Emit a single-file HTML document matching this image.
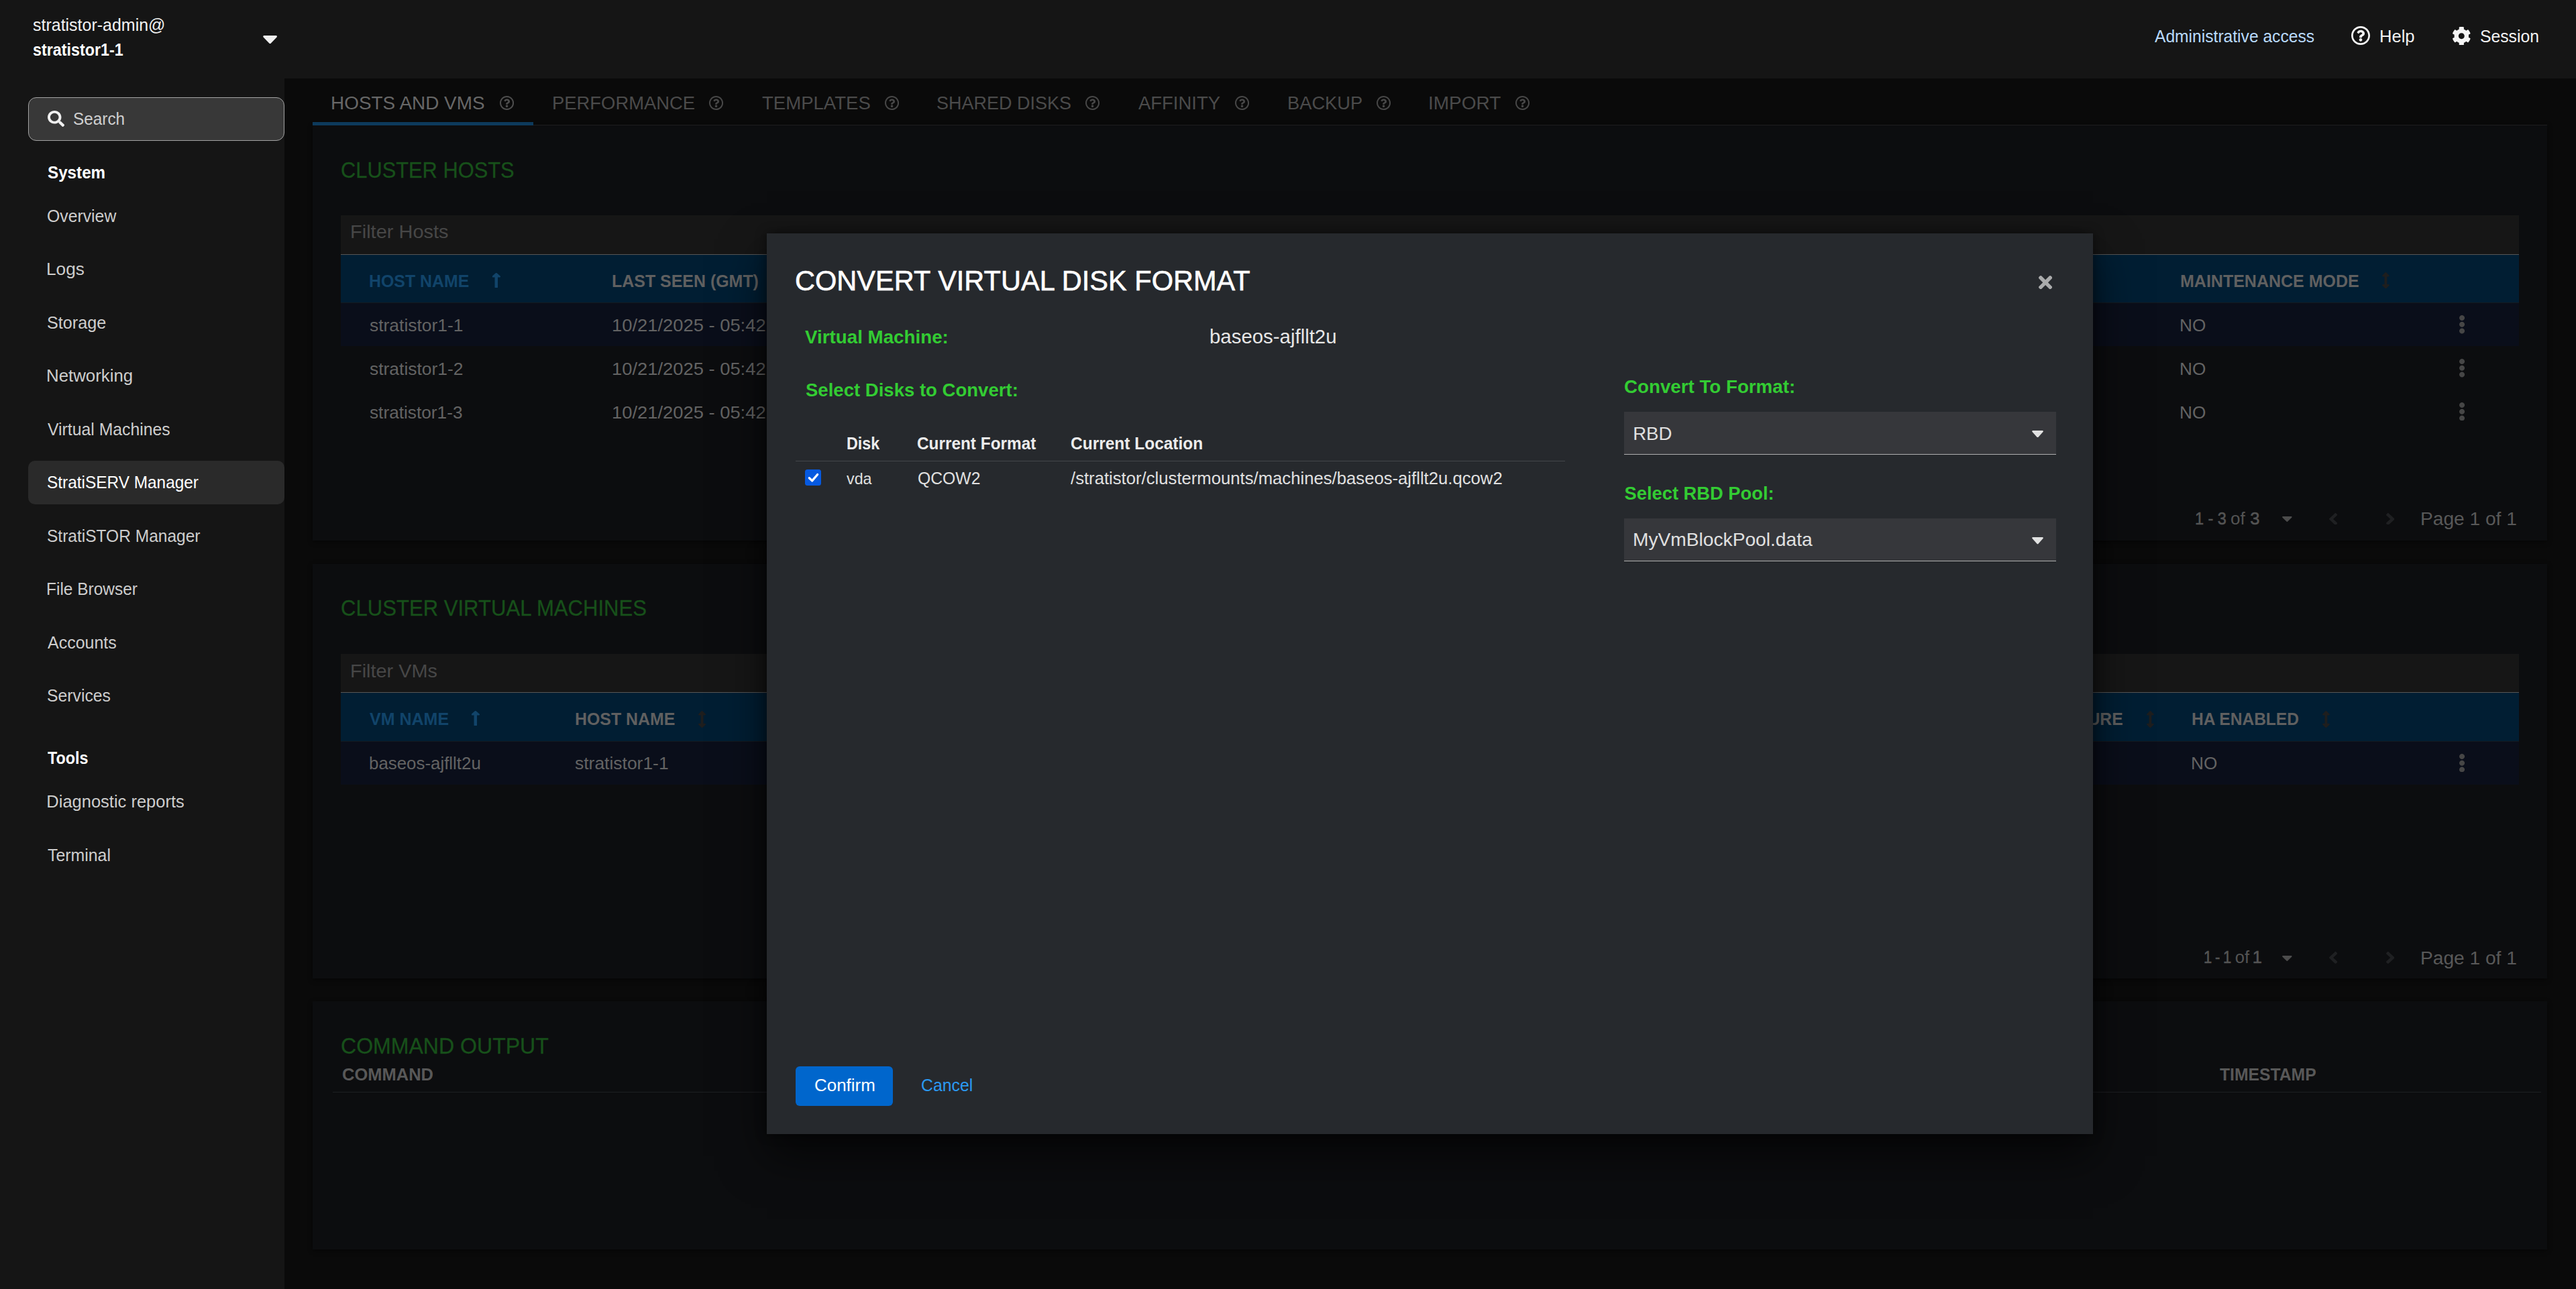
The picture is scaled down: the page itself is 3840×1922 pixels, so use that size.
<!DOCTYPE html>
<html lang="en"><head><meta charset="utf-8"><title>StratiSERV Manager - Convert Virtual Disk Format</title>
<style>
html,body{margin:0;padding:0;background:#0a0a0a;}
body{width:3840px;height:1922px;overflow:hidden;position:relative;font-family:"Liberation Sans", sans-serif;-webkit-font-smoothing:antialiased;}
#root{position:absolute;left:0;top:0;width:3840px;height:1922px;overflow:hidden;}
#root div,#root span,#root svg{position:absolute;}
#root span{white-space:pre;transform-origin:0 0;}
.md{-webkit-text-stroke:0.6px currentColor;}
.sm{-webkit-text-stroke:0.3px currentColor;}
</style></head><body>
<div id="root">
<main>
<div style="left:424px;top:117px;width:3416px;height:1805px;background:#0a0a0a;"></div>
<div style="left:466px;top:186px;width:3331px;height:620px;background:#0c0d0f;box-shadow:0 2px 6px rgba(0,0,0,.5);"></div>
<div style="left:466px;top:841px;width:3331px;height:618px;background:#0c0d0f;box-shadow:0 2px 6px rgba(0,0,0,.5);"></div>
<div style="left:466px;top:1493px;width:3331px;height:370px;background:#0c0d0f;box-shadow:0 2px 6px rgba(0,0,0,.5);"></div>
<div style="left:466px;top:186px;width:3331px;height:1px;background:#1e1e1e;"></div>
<div style="left:466px;top:182px;width:329px;height:5px;background:#0d3a5c;"></div>
<span style="left:492.62px;top:138.63px;font-size:28.2px;line-height:28.2px;color:#676767;transform:scaleX(0.9906);">HOSTS AND VMS</span>
<svg style="left:745.4px;top:143px" width="21.1" height="21" viewBox="8 8 496 496" preserveAspectRatio="none"><path fill="#4d4d4d" d="M256 8C119.043 8 8 119.083 8 256c0 136.997 111.043 248 248 248s248-111.003 248-248C504 119.083 392.957 8 256 8zm0 448c-110.532 0-200-89.431-200-200 0-110.495 89.472-200 200-200 110.491 0 200 89.471 200 200 0 110.53-89.431 200-200 200zm107.244-255.2c0 67.052-72.421 68.084-72.421 92.863V300c0 6.627-5.373 12-12 12h-45.647c-6.627 0-12-5.373-12-12v-8.659c0-35.745 27.1-50.034 47.579-61.516 17.561-9.845 28.324-16.541 28.324-29.579 0-17.246-21.999-28.693-39.784-28.693-23.189 0-33.894 10.977-48.942 29.969-4.057 5.12-11.46 6.071-16.666 2.124l-27.824-21.098c-5.107-3.872-6.251-11.066-2.644-16.363C184.846 131.491 214.94 112 261.794 112c49.071 0 101.45 38.304 101.45 88.8zM298 368c0 23.159-18.841 42-42 42s-42-18.841-42-42 18.841-42 42-42 42 18.841 42 42z"/></svg>
<span style="left:822.76px;top:138.63px;font-size:28.2px;line-height:28.2px;color:#4b4b4b;transform:scaleX(0.9720);">PERFORMANCE</span>
<svg style="left:1057.1px;top:143px" width="21.1" height="21" viewBox="8 8 496 496" preserveAspectRatio="none"><path fill="#474747" d="M256 8C119.043 8 8 119.083 8 256c0 136.997 111.043 248 248 248s248-111.003 248-248C504 119.083 392.957 8 256 8zm0 448c-110.532 0-200-89.431-200-200 0-110.495 89.472-200 200-200 110.491 0 200 89.471 200 200 0 110.53-89.431 200-200 200zm107.244-255.2c0 67.052-72.421 68.084-72.421 92.863V300c0 6.627-5.373 12-12 12h-45.647c-6.627 0-12-5.373-12-12v-8.659c0-35.745 27.1-50.034 47.579-61.516 17.561-9.845 28.324-16.541 28.324-29.579 0-17.246-21.999-28.693-39.784-28.693-23.189 0-33.894 10.977-48.942 29.969-4.057 5.12-11.46 6.071-16.666 2.124l-27.824-21.098c-5.107-3.872-6.251-11.066-2.644-16.363C184.846 131.491 214.94 112 261.794 112c49.071 0 101.45 38.304 101.45 88.8zM298 368c0 23.159-18.841 42-42 42s-42-18.841-42-42 18.841-42 42-42 42 18.841 42 42z"/></svg>
<span style="left:1136.00px;top:138.63px;font-size:28.2px;line-height:28.2px;color:#4b4b4b;transform:scaleX(0.9775);">TEMPLATES</span>
<svg style="left:1319px;top:143px" width="21.1" height="21" viewBox="8 8 496 496" preserveAspectRatio="none"><path fill="#474747" d="M256 8C119.043 8 8 119.083 8 256c0 136.997 111.043 248 248 248s248-111.003 248-248C504 119.083 392.957 8 256 8zm0 448c-110.532 0-200-89.431-200-200 0-110.495 89.472-200 200-200 110.491 0 200 89.471 200 200 0 110.53-89.431 200-200 200zm107.244-255.2c0 67.052-72.421 68.084-72.421 92.863V300c0 6.627-5.373 12-12 12h-45.647c-6.627 0-12-5.373-12-12v-8.659c0-35.745 27.1-50.034 47.579-61.516 17.561-9.845 28.324-16.541 28.324-29.579 0-17.246-21.999-28.693-39.784-28.693-23.189 0-33.894 10.977-48.942 29.969-4.057 5.12-11.46 6.071-16.666 2.124l-27.824-21.098c-5.107-3.872-6.251-11.066-2.644-16.363C184.846 131.491 214.94 112 261.794 112c49.071 0 101.45 38.304 101.45 88.8zM298 368c0 23.159-18.841 42-42 42s-42-18.841-42-42 18.841-42 42-42 42 18.841 42 42z"/></svg>
<span style="left:1395.84px;top:138.63px;font-size:28.2px;line-height:28.2px;color:#4b4b4b;transform:scaleX(0.9573);">SHARED DISKS</span>
<svg style="left:1618px;top:143px" width="21.1" height="21" viewBox="8 8 496 496" preserveAspectRatio="none"><path fill="#474747" d="M256 8C119.043 8 8 119.083 8 256c0 136.997 111.043 248 248 248s248-111.003 248-248C504 119.083 392.957 8 256 8zm0 448c-110.532 0-200-89.431-200-200 0-110.495 89.472-200 200-200 110.491 0 200 89.471 200 200 0 110.53-89.431 200-200 200zm107.244-255.2c0 67.052-72.421 68.084-72.421 92.863V300c0 6.627-5.373 12-12 12h-45.647c-6.627 0-12-5.373-12-12v-8.659c0-35.745 27.1-50.034 47.579-61.516 17.561-9.845 28.324-16.541 28.324-29.579 0-17.246-21.999-28.693-39.784-28.693-23.189 0-33.894 10.977-48.942 29.969-4.057 5.12-11.46 6.071-16.666 2.124l-27.824-21.098c-5.107-3.872-6.251-11.066-2.644-16.363C184.846 131.491 214.94 112 261.794 112c49.071 0 101.45 38.304 101.45 88.8zM298 368c0 23.159-18.841 42-42 42s-42-18.841-42-42 18.841-42 42-42 42 18.841 42 42z"/></svg>
<span style="left:1696.80px;top:138.63px;font-size:28.2px;line-height:28.2px;color:#4b4b4b;transform:scaleX(0.9739);">AFFINITY</span>
<svg style="left:1840.7px;top:143px" width="21.1" height="21" viewBox="8 8 496 496" preserveAspectRatio="none"><path fill="#474747" d="M256 8C119.043 8 8 119.083 8 256c0 136.997 111.043 248 248 248s248-111.003 248-248C504 119.083 392.957 8 256 8zm0 448c-110.532 0-200-89.431-200-200 0-110.495 89.472-200 200-200 110.491 0 200 89.471 200 200 0 110.53-89.431 200-200 200zm107.244-255.2c0 67.052-72.421 68.084-72.421 92.863V300c0 6.627-5.373 12-12 12h-45.647c-6.627 0-12-5.373-12-12v-8.659c0-35.745 27.1-50.034 47.579-61.516 17.561-9.845 28.324-16.541 28.324-29.579 0-17.246-21.999-28.693-39.784-28.693-23.189 0-33.894 10.977-48.942 29.969-4.057 5.12-11.46 6.071-16.666 2.124l-27.824-21.098c-5.107-3.872-6.251-11.066-2.644-16.363C184.846 131.491 214.94 112 261.794 112c49.071 0 101.45 38.304 101.45 88.8zM298 368c0 23.159-18.841 42-42 42s-42-18.841-42-42 18.841-42 42-42 42 18.841 42 42z"/></svg>
<span style="left:1918.56px;top:138.63px;font-size:28.2px;line-height:28.2px;color:#4b4b4b;transform:scaleX(0.9680);">BACKUP</span>
<svg style="left:2051.6px;top:143px" width="21.1" height="21" viewBox="8 8 496 496" preserveAspectRatio="none"><path fill="#474747" d="M256 8C119.043 8 8 119.083 8 256c0 136.997 111.043 248 248 248s248-111.003 248-248C504 119.083 392.957 8 256 8zm0 448c-110.532 0-200-89.431-200-200 0-110.495 89.472-200 200-200 110.491 0 200 89.471 200 200 0 110.53-89.431 200-200 200zm107.244-255.2c0 67.052-72.421 68.084-72.421 92.863V300c0 6.627-5.373 12-12 12h-45.647c-6.627 0-12-5.373-12-12v-8.659c0-35.745 27.1-50.034 47.579-61.516 17.561-9.845 28.324-16.541 28.324-29.579 0-17.246-21.999-28.693-39.784-28.693-23.189 0-33.894 10.977-48.942 29.969-4.057 5.12-11.46 6.071-16.666 2.124l-27.824-21.098c-5.107-3.872-6.251-11.066-2.644-16.363C184.846 131.491 214.94 112 261.794 112c49.071 0 101.45 38.304 101.45 88.8zM298 368c0 23.159-18.841 42-42 42s-42-18.841-42-42 18.841-42 42-42 42 18.841 42 42z"/></svg>
<span style="left:2128.61px;top:138.63px;font-size:28.2px;line-height:28.2px;color:#4b4b4b;transform:scaleX(0.9936);">IMPORT</span>
<svg style="left:2258.6px;top:143px" width="21.1" height="21" viewBox="8 8 496 496" preserveAspectRatio="none"><path fill="#474747" d="M256 8C119.043 8 8 119.083 8 256c0 136.997 111.043 248 248 248s248-111.003 248-248C504 119.083 392.957 8 256 8zm0 448c-110.532 0-200-89.431-200-200 0-110.495 89.472-200 200-200 110.491 0 200 89.471 200 200 0 110.53-89.431 200-200 200zm107.244-255.2c0 67.052-72.421 68.084-72.421 92.863V300c0 6.627-5.373 12-12 12h-45.647c-6.627 0-12-5.373-12-12v-8.659c0-35.745 27.1-50.034 47.579-61.516 17.561-9.845 28.324-16.541 28.324-29.579 0-17.246-21.999-28.693-39.784-28.693-23.189 0-33.894 10.977-48.942 29.969-4.057 5.12-11.46 6.071-16.666 2.124l-27.824-21.098c-5.107-3.872-6.251-11.066-2.644-16.363C184.846 131.491 214.94 112 261.794 112c49.071 0 101.45 38.304 101.45 88.8zM298 368c0 23.159-18.841 42-42 42s-42-18.841-42-42 18.841-42 42-42 42 18.841 42 42z"/></svg>
<span class="sm" style="left:508.35px;top:237.89px;font-size:32.5px;line-height:32.5px;color:#17501a;transform:scaleX(0.9483);">CLUSTER HOSTS</span>
<span class="sm" style="left:508.34px;top:890.79px;font-size:32.5px;line-height:32.5px;color:#17501a;transform:scaleX(0.9564);">CLUSTER VIRTUAL MACHINES</span>
<span class="sm" style="left:508.31px;top:1544.39px;font-size:32.5px;line-height:32.5px;color:#17501a;transform:scaleX(0.9863);">COMMAND OUTPUT</span>
<div style="left:508px;top:320.5px;width:3247px;height:59.5px;background:#161616;border-bottom:1px solid #565656;box-sizing:border-box;"></div>
<span style="left:521.53px;top:332.20px;font-size:28px;line-height:28px;color:#474747;transform:scaleX(1.0356);">Filter Hosts</span>
<div style="left:508px;top:380px;width:3247px;height:71.5px;background:#011e33;border-bottom:1px solid #15191f;box-sizing:border-box;"></div>
<div style="left:508px;top:451.5px;width:3247px;height:64.5px;background:#0a0e1a;"></div>
<span style="left:550.00px;top:407.24px;font-size:25px;line-height:25px;color:#11446a;transform:scaleX(0.9965);font-weight:700;">HOST NAME</span>
<svg style="left:734.4px;top:407.3px" width="11.6" height="22.1" viewBox="25 32 206 448" preserveAspectRatio="none"><path fill="#11446a" d="M88 166.059V468c0 6.627 5.373 12 12 12h56c6.627 0 12-5.373 12-12V166.059h46.059c21.382 0 32.09-25.851 16.971-40.971l-86.059-86.059c-9.373-9.373-24.569-9.373-33.941 0l-86.059 86.059c-15.119 15.119-4.411 40.971 16.971 40.971H88z"/></svg>
<span style="left:912.20px;top:407.14px;font-size:25px;line-height:25px;color:#606060;transform:scaleX(0.9977);font-weight:700;">LAST SEEN (GMT)</span>
<span style="left:3250.00px;top:407.24px;font-size:25px;line-height:25px;color:#606060;font-weight:700;">MAINTENANCE MODE</span>
<svg style="left:3551px;top:406.1px" width="10.8" height="24.4" viewBox="17 0 222 512" preserveAspectRatio="none"><path fill="#1e1e1e" d="M214.059 377.941H168V134.059h46.059c21.382 0 32.09-25.851 16.971-40.971L144.971 7.029c-9.373-9.373-24.568-9.373-33.941 0L24.971 93.088c-15.119 15.119-4.411 40.971 16.971 40.971H88v243.882H41.941c-21.382 0-32.09 25.851-16.971 40.971l86.059 86.059c9.373 9.373 24.568 9.373 33.941 0l86.059-86.059c15.12-15.119 4.412-40.971-16.97-40.971z"/></svg>
<span style="left:551.00px;top:473.21px;font-size:25.5px;line-height:25.5px;color:#636363;transform:scaleX(1.0364);">stratistor1-1</span>
<span style="left:912.13px;top:473.21px;font-size:25.5px;line-height:25.5px;color:#636363;transform:scaleX(1.0726);">10/21/2025 - 05:42</span>
<span style="left:3248.95px;top:473.21px;font-size:25.5px;line-height:25.5px;color:#636363;transform:scaleX(1.0250);">NO</span>
<svg style="left:3666.1px;top:470.4px" width="8.1" height="27.5" viewBox="24 8 144 496" preserveAspectRatio="none"><path fill="#464646" d="M96 184c39.8 0 72 32.2 72 72s-32.2 72-72 72-72-32.2-72-72 32.2-72 72-72zM24 80c0 39.8 32.2 72 72 72s72-32.2 72-72S135.8 8 96 8 24 40.2 24 80zm0 352c0 39.8 32.2 72 72 72s72-32.2 72-72-32.2-72-72-72-72 32.2-72 72z"/></svg>
<span style="left:551.00px;top:537.91px;font-size:25.5px;line-height:25.5px;color:#636363;transform:scaleX(1.0364);">stratistor1-2</span>
<span style="left:912.13px;top:537.91px;font-size:25.5px;line-height:25.5px;color:#636363;transform:scaleX(1.0726);">10/21/2025 - 05:42</span>
<span style="left:3248.95px;top:537.91px;font-size:25.5px;line-height:25.5px;color:#636363;transform:scaleX(1.0250);">NO</span>
<svg style="left:3666.1px;top:535.1px" width="8.1" height="27.5" viewBox="24 8 144 496" preserveAspectRatio="none"><path fill="#464646" d="M96 184c39.8 0 72 32.2 72 72s-32.2 72-72 72-72-32.2-72-72 32.2-72 72-72zM24 80c0 39.8 32.2 72 72 72s72-32.2 72-72S135.8 8 96 8 24 40.2 24 80zm0 352c0 39.8 32.2 72 72 72s72-32.2 72-72-32.2-72-72-72-72 32.2-72 72z"/></svg>
<span style="left:551.00px;top:602.61px;font-size:25.5px;line-height:25.5px;color:#636363;transform:scaleX(1.0287);">stratistor1-3</span>
<span style="left:912.13px;top:602.61px;font-size:25.5px;line-height:25.5px;color:#636363;transform:scaleX(1.0726);">10/21/2025 - 05:42</span>
<span style="left:3248.95px;top:602.61px;font-size:25.5px;line-height:25.5px;color:#636363;transform:scaleX(1.0250);">NO</span>
<svg style="left:3666.1px;top:599.8px" width="8.1" height="27.5" viewBox="24 8 144 496" preserveAspectRatio="none"><path fill="#464646" d="M96 184c39.8 0 72 32.2 72 72s-32.2 72-72 72-72-32.2-72-72 32.2-72 72-72zM24 80c0 39.8 32.2 72 72 72s72-32.2 72-72S135.8 8 96 8 24 40.2 24 80zm0 352c0 39.8 32.2 72 72 72s72-32.2 72-72-32.2-72-72-72-72 32.2-72 72z"/></svg>
<div style="left:508px;top:975px;width:3247px;height:58px;background:#161616;border-bottom:1px solid #565656;box-sizing:border-box;"></div>
<span style="left:521.54px;top:986.70px;font-size:28px;line-height:28px;color:#474747;transform:scaleX(1.0309);">Filter VMs</span>
<div style="left:508px;top:1033px;width:3247px;height:72.5px;background:#011e33;border-bottom:1px solid #15191f;box-sizing:border-box;"></div>
<div style="left:508px;top:1105.5px;width:3247px;height:64.5px;background:#0a0e1a;"></div>
<span style="left:551.00px;top:1060.14px;font-size:25px;line-height:25px;color:#11446a;font-weight:700;">VM NAME</span>
<svg style="left:703.4px;top:1060.2px" width="11.6" height="22.1" viewBox="25 32 206 448" preserveAspectRatio="none"><path fill="#11446a" d="M88 166.059V468c0 6.627 5.373 12 12 12h56c6.627 0 12-5.373 12-12V166.059h46.059c21.382 0 32.09-25.851 16.971-40.971l-86.059-86.059c-9.373-9.373-24.569-9.373-33.941 0l-86.059 86.059c-15.119 15.119-4.411 40.971 16.971 40.971H88z"/></svg>
<span style="left:857.10px;top:1060.24px;font-size:25px;line-height:25px;color:#606060;transform:scaleX(0.9958);font-weight:700;">HOST NAME</span>
<svg style="left:1040.7px;top:1059.8px" width="11.1" height="25.3" viewBox="17 0 222 512" preserveAspectRatio="none"><path fill="#1e1e1e" d="M214.059 377.941H168V134.059h46.059c21.382 0 32.09-25.851 16.971-40.971L144.971 7.029c-9.373-9.373-24.568-9.373-33.941 0L24.971 93.088c-15.119 15.119-4.411 40.971 16.971 40.971H88v243.882H41.941c-21.382 0-32.09 25.851-16.971 40.971l86.059 86.059c9.373 9.373 24.568 9.373 33.941 0l86.059-86.059c15.12-15.119 4.412-40.971-16.97-40.971z"/></svg>
<span style="left:3059.01px;top:1060.14px;font-size:25px;line-height:25px;color:#606060;transform:scaleX(0.9879);font-weight:700;">FAILURE</span>
<svg style="left:3199.8px;top:1059.8px" width="10.8" height="25.3" viewBox="17 0 222 512" preserveAspectRatio="none"><path fill="#1e1e1e" d="M214.059 377.941H168V134.059h46.059c21.382 0 32.09-25.851 16.971-40.971L144.971 7.029c-9.373-9.373-24.568-9.373-33.941 0L24.971 93.088c-15.119 15.119-4.411 40.971 16.971 40.971H88v243.882H41.941c-21.382 0-32.09 25.851-16.971 40.971l86.059 86.059c9.373 9.373 24.568 9.373 33.941 0l86.059-86.059c15.12-15.119 4.412-40.971-16.97-40.971z"/></svg>
<span style="left:3266.62px;top:1060.14px;font-size:25px;line-height:25px;color:#606060;transform:scaleX(0.9812);font-weight:700;">HA ENABLED</span>
<svg style="left:3462px;top:1059.8px" width="10.8" height="25.3" viewBox="17 0 222 512" preserveAspectRatio="none"><path fill="#1e1e1e" d="M214.059 377.941H168V134.059h46.059c21.382 0 32.09-25.851 16.971-40.971L144.971 7.029c-9.373-9.373-24.568-9.373-33.941 0L24.971 93.088c-15.119 15.119-4.411 40.971 16.971 40.971H88v243.882H41.941c-21.382 0-32.09 25.851-16.971 40.971l86.059 86.059c9.373 9.373 24.568 9.373 33.941 0l86.059-86.059c15.12-15.119 4.412-40.971-16.97-40.971z"/></svg>
<span style="left:549.99px;top:1125.51px;font-size:25.5px;line-height:25.5px;color:#636363;transform:scaleX(1.0145);">baseos-ajfllt2u</span>
<span style="left:857.40px;top:1125.51px;font-size:25.5px;line-height:25.5px;color:#636363;transform:scaleX(1.0372);">stratistor1-1</span>
<span style="left:3266.45px;top:1125.51px;font-size:25.5px;line-height:25.5px;color:#636363;transform:scaleX(1.0250);">NO</span>
<svg style="left:3666.1px;top:1123.6px" width="8.1" height="27.4" viewBox="24 8 144 496" preserveAspectRatio="none"><path fill="#464646" d="M96 184c39.8 0 72 32.2 72 72s-32.2 72-72 72-72-32.2-72-72 32.2-72 72-72zM24 80c0 39.8 32.2 72 72 72s72-32.2 72-72S135.8 8 96 8 24 40.2 24 80zm0 352c0 39.8 32.2 72 72 72s72-32.2 72-72-32.2-72-72-72-72 32.2-72 72z"/></svg>
<span class="md" style="left:3272.28px;top:760.71px;font-size:25.5px;line-height:25.5px;color:#545454;transform:scaleX(0.9189);">1 - 3</span>
<span style="left:3325.28px;top:760.71px;font-size:25.5px;line-height:25.5px;color:#545454;transform:scaleX(1.0197);">of</span>
<span class="md" style="left:3354.35px;top:760.71px;font-size:25.5px;line-height:25.5px;color:#545454;">3</span>
<span style="left:3608.22px;top:761.44px;font-size:27px;line-height:27px;color:#585858;transform:scaleX(1.0415);">Page 1 of 1</span>
<svg style="left:3402.4px;top:770.3px" width="14.7" height="8.1" viewBox="8 192 304 169" preserveAspectRatio="none"><path fill="#4c4c4c" d="M31.3 192h257.3c17.8 0 26.7 21.5 14.1 34.1L174.1 354.8c-7.8 7.8-20.5 7.8-28.3 0L17.2 226.1C4.6 213.5 13.5 192 31.3 192z"/></svg>
<svg style="left:3472px;top:764.6px" width="12.2" height="17.8" viewBox="24.6 96 206.6 320" preserveAspectRatio="none"><path fill="#1f2022" d="M31.7 239l136-136c9.4-9.4 24.6-9.4 33.9 0l22.6 22.6c9.4 9.4 9.4 24.6 0 33.9L127.9 256l96.4 96.4c9.4 9.4 9.4 24.6 0 33.9L201.7 409c-9.4 9.4-24.6 9.4-33.9 0l-136-136c-9.5-9.4-9.5-24.6-.1-34z"/></svg>
<svg style="left:3556.8px;top:764.6px" width="12.5" height="17.8" viewBox="24.8 96 206.6 320" preserveAspectRatio="none"><path fill="#1f2022" d="M224.3 273l-136 136c-9.4 9.4-24.6 9.4-33.9 0l-22.6-22.6c-9.4-9.4-9.4-24.6 0-33.9l96.4-96.4-96.4-96.4c-9.4-9.4-9.4-24.6 0-33.9L54.3 103c9.4-9.4 24.6-9.4 33.9 0l136 136c9.5 9.4 9.5 24.6.1 34z"/></svg>
<span class="md" style="left:3285.44px;top:1414.91px;font-size:25.5px;line-height:25.5px;color:#545454;letter-spacing:-0.757px;transform:scaleX(0.8600);">1 - 1</span>
<span style="left:3331.80px;top:1414.91px;font-size:25.5px;line-height:25.5px;color:#545454;">of</span>
<span class="md" style="left:3357.85px;top:1414.91px;font-size:25.5px;line-height:25.5px;color:#545454;">1</span>
<span style="left:3608.22px;top:1415.64px;font-size:27px;line-height:27px;color:#585858;transform:scaleX(1.0415);">Page 1 of 1</span>
<svg style="left:3402.4px;top:1424.5px" width="14.7" height="8.1" viewBox="8 192 304 169" preserveAspectRatio="none"><path fill="#4c4c4c" d="M31.3 192h257.3c17.8 0 26.7 21.5 14.1 34.1L174.1 354.8c-7.8 7.8-20.5 7.8-28.3 0L17.2 226.1C4.6 213.5 13.5 192 31.3 192z"/></svg>
<svg style="left:3472px;top:1418.8px" width="12.2" height="17.8" viewBox="24.6 96 206.6 320" preserveAspectRatio="none"><path fill="#1f2022" d="M31.7 239l136-136c9.4-9.4 24.6-9.4 33.9 0l22.6 22.6c9.4 9.4 9.4 24.6 0 33.9L127.9 256l96.4 96.4c9.4 9.4 9.4 24.6 0 33.9L201.7 409c-9.4 9.4-24.6 9.4-33.9 0l-136-136c-9.5-9.4-9.5-24.6-.1-34z"/></svg>
<svg style="left:3556.8px;top:1418.8px" width="12.5" height="17.8" viewBox="24.8 96 206.6 320" preserveAspectRatio="none"><path fill="#1f2022" d="M224.3 273l-136 136c-9.4 9.4-24.6 9.4-33.9 0l-22.6-22.6c-9.4-9.4-9.4-24.6 0-33.9l96.4-96.4-96.4-96.4c-9.4-9.4-9.4-24.6 0-33.9L54.3 103c9.4-9.4 24.6-9.4 33.9 0l136 136c9.5 9.4 9.5 24.6.1 34z"/></svg>
<span style="left:509.51px;top:1589.54px;font-size:25.7px;line-height:25.7px;color:#585858;transform:scaleX(0.9931);font-weight:700;">COMMAND</span>
<span style="left:3309.00px;top:1589.54px;font-size:25.7px;line-height:25.7px;color:#585858;transform:scaleX(0.9616);font-weight:700;">TIMESTAMP</span>
<div style="left:496px;top:1628px;width:3292px;height:1px;background:#1d1f22;"></div>
</main>
<section role="dialog" aria-modal="true" aria-label="Convert virtual disk format">
<div style="left:1143px;top:348px;width:1977px;height:1342.5px;background:#26292d;box-shadow:0 32px 64px 0 rgba(2,2,2,.6),0 0 16px 0 rgba(2,2,2,.45);"></div>
<span class="md" style="left:1185.32px;top:398.35px;font-size:42px;line-height:42px;color:#ffffff;transform:scaleX(0.9890);">CONVERT VIRTUAL DISK FORMAT</span>
<svg style="left:3039px;top:411px" width="20.2" height="20.3" viewBox="0 80 352 352" preserveAspectRatio="none"><path fill="#aaabac" d="M242.72 256l100.07-100.07c12.28-12.28 12.28-32.19 0-44.48l-22.24-22.24c-12.28-12.28-32.19-12.28-44.48 0L176 189.28 75.93 89.21c-12.28-12.28-32.19-12.28-44.48 0L9.21 111.45c-12.28 12.28-12.28 32.19 0 44.48L109.28 256 9.21 356.07c-12.28 12.28-12.28 32.19 0 44.48l22.24 22.24c12.28 12.28 32.2 12.28 44.48 0L176 322.72l100.07 100.07c12.28 12.28 32.2 12.28 44.48 0l22.24-22.24c12.28-12.28 12.28-32.19 0-44.48L242.72 256z"/></svg>
<span style="left:1200.10px;top:489.29px;font-size:27.3px;line-height:27.3px;color:#33cc33;transform:scaleX(1.0166);font-weight:700;">Virtual Machine:</span>
<span style="left:1803.19px;top:487.85px;font-size:29px;line-height:29px;color:#e6e6e6;transform:scaleX(1.0137);">baseos-ajfllt2u</span>
<span style="left:1200.60px;top:568.09px;font-size:27.3px;line-height:27.3px;color:#33cc33;transform:scaleX(1.0089);font-weight:700;">Select Disks to Convert:</span>
<span style="left:1261.67px;top:648.94px;font-size:25px;line-height:25px;color:#ececec;transform:scaleX(0.9325);font-weight:700;">Disk</span>
<span style="left:1367.03px;top:648.94px;font-size:25px;line-height:25px;color:#ececec;transform:scaleX(0.9745);font-weight:700;">Current Format</span>
<span style="left:1596.32px;top:648.94px;font-size:25px;line-height:25px;color:#ececec;transform:scaleX(0.9793);font-weight:700;">Current Location</span>
<div style="left:1186.2px;top:686.5px;width:1146.8px;height:1.5px;background:#44474b;"></div>
<div style="left:1200px;top:699.5px;width:24.1px;height:24.0px;background:#0659e0;border-radius:3.5px;"></div>
<svg style="left:1200px;top:699.5px" width="24.1" height="24" viewBox="0 0 24 24"><path d="M6.3 12.7L10.6 16.9L18.6 7.5" fill="none" stroke="#fff" stroke-width="3.3" stroke-linecap="round" stroke-linejoin="round"/></svg>
<span style="left:1262.00px;top:701.98px;font-size:24px;line-height:24px;color:#e0e0e0;transform:scaleX(0.9708);">vda</span>
<span style="left:1367.83px;top:700.71px;font-size:25.5px;line-height:25.5px;color:#e0e0e0;transform:scaleX(0.9697);">QCOW2</span>
<span style="left:1596.20px;top:700.71px;font-size:25.5px;line-height:25.5px;color:#e0e0e0;transform:scaleX(1.0070);">/stratistor/clustermounts/machines/baseos-ajfllt2u.qcow2</span>
<span style="left:2420.58px;top:563.39px;font-size:27.3px;line-height:27.3px;color:#33cc33;transform:scaleX(1.0156);font-weight:700;">Convert To Format:</span>
<div style="left:2421.3px;top:614px;width:643.7px;height:62.7px;background:#36373b;"></div>
<div style="left:2421.3px;top:676.7px;width:643.7px;height:1.3px;background:#afafaf;"></div>
<span style="left:2434.20px;top:632.94px;font-size:27.6px;line-height:27.6px;color:#e0e0e0;">RBD</span>
<svg style="left:3028.6px;top:642.2px" width="17.0" height="10.3" viewBox="8 192 304 169" preserveAspectRatio="none"><path fill="#e1e1e1" d="M31.3 192h257.3c17.8 0 26.7 21.5 14.1 34.1L174.1 354.8c-7.8 7.8-20.5 7.8-28.3 0L17.2 226.1C4.6 213.5 13.5 192 31.3 192z"/></svg>
<span style="left:2421.60px;top:721.69px;font-size:27.3px;line-height:27.3px;color:#33cc33;font-weight:700;">Select RBD Pool:</span>
<div style="left:2421.3px;top:773.2px;width:643.7px;height:62.5px;background:#36373b;"></div>
<div style="left:2421.3px;top:835.7px;width:643.7px;height:1.3px;background:#afafaf;"></div>
<span style="left:2434.16px;top:791.24px;font-size:27.6px;line-height:27.6px;color:#e0e0e0;transform:scaleX(1.0207);">MyVmBlockPool.data</span>
<svg style="left:3028.6px;top:801.4px" width="17.0" height="10.3" viewBox="8 192 304 169" preserveAspectRatio="none"><path fill="#e1e1e1" d="M31.3 192h257.3c17.8 0 26.7 21.5 14.1 34.1L174.1 354.8c-7.8 7.8-20.5 7.8-28.3 0L17.2 226.1C4.6 213.5 13.5 192 31.3 192z"/></svg>
<div style="left:1186px;top:1590.3px;width:144.6px;height:58.4px;background:#0066cc;border-radius:6px;"></div>
<span style="left:1213.69px;top:1606.16px;font-size:25.8px;line-height:25.8px;color:#ffffff;transform:scaleX(1.0055);">Confirm</span>
<span style="left:1373.44px;top:1606.16px;font-size:25.8px;line-height:25.8px;color:#2b9af3;transform:scaleX(0.9617);">Cancel</span>
</section>
<nav>
<div style="left:0px;top:0px;width:3840px;height:117px;background:#151515;"></div>
<div style="left:0px;top:117px;width:424px;height:1805px;background:#151515;"></div>
<span style="left:49.40px;top:24.91px;font-size:25.5px;line-height:25.5px;color:#f2f2f2;transform:scaleX(0.9794);">stratistor-admin@</span>
<span style="left:49.40px;top:61.61px;font-size:25.5px;line-height:25.5px;color:#ffffff;transform:scaleX(0.9144);font-weight:700;">stratistor1-1</span>
<svg style="left:391.8px;top:53px" width="21.2" height="12.2" viewBox="8 192 304 169" preserveAspectRatio="none"><path fill="#f0f0f0" d="M31.3 192h257.3c17.8 0 26.7 21.5 14.1 34.1L174.1 354.8c-7.8 7.8-20.5 7.8-28.3 0L17.2 226.1C4.6 213.5 13.5 192 31.3 192z"/></svg>
<div style="left:42px;top:145px;width:382px;height:65px;background:#383838;border:1.5px solid #a3a3a3;border-radius:12px;box-sizing:border-box;"></div>
<svg style="left:70.8px;top:165px" width="25.2" height="24" viewBox="0 0 512 512" preserveAspectRatio="none"><path fill="#f0f0f0" d="M505 442.7L405.3 343c-4.5-4.5-10.6-7-17-7H372c27.6-35.3 44-79.7 44-128C416 93.1 322.9 0 208 0S0 93.1 0 208s93.1 208 208 208c48.3 0 92.7-16.4 128-44v16.3c0 6.4 2.5 12.5 7 17l99.7 99.7c9.4 9.4 24.6 9.4 33.9 0l28.3-28.3c9.4-9.4 9.4-24.6.1-34zM208 336c-70.7 0-128-57.2-128-128 0-70.7 57.2-128 128-128 70.7 0 128 57.2 128 128 0 70.7-57.2 128-128 128z"/></svg>
<span style="left:108.85px;top:164.71px;font-size:25.5px;line-height:25.5px;color:#cfcfcf;transform:scaleX(0.9540);">Search</span>
<span style="left:71.00px;top:244.91px;font-size:25.5px;line-height:25.5px;color:#ffffff;transform:scaleX(0.9495);font-weight:700;">System</span>
<div style="left:42px;top:687px;width:382px;height:65px;background:#2a2a2a;border-radius:10px;"></div>
<span style="left:70.33px;top:309.71px;font-size:25.5px;line-height:25.5px;color:#cdcdcd;transform:scaleX(0.9721);">Overview</span>
<span style="left:69.24px;top:389.21px;font-size:25.5px;line-height:25.5px;color:#cdcdcd;transform:scaleX(1.0277);">Logs</span>
<span style="left:70.31px;top:468.71px;font-size:25.5px;line-height:25.5px;color:#cdcdcd;transform:scaleX(0.9872);">Storage</span>
<span style="left:69.27px;top:548.21px;font-size:25.5px;line-height:25.5px;color:#cdcdcd;transform:scaleX(1.0131);">Networking</span>
<span style="left:71.30px;top:627.71px;font-size:25.5px;line-height:25.5px;color:#cdcdcd;transform:scaleX(0.9712);">Virtual Machines</span>
<span style="left:70.34px;top:707.21px;font-size:25.5px;line-height:25.5px;color:#ffffff;transform:scaleX(0.9566);">StratiSERV Manager</span>
<span style="left:70.34px;top:786.71px;font-size:25.5px;line-height:25.5px;color:#cdcdcd;transform:scaleX(0.9615);">StratiSTOR Manager</span>
<span style="left:69.38px;top:866.21px;font-size:25.5px;line-height:25.5px;color:#cdcdcd;transform:scaleX(0.9593);">File Browser</span>
<span style="left:71.30px;top:945.71px;font-size:25.5px;line-height:25.5px;color:#cdcdcd;transform:scaleX(0.9795);">Accounts</span>
<span style="left:70.33px;top:1025.21px;font-size:25.5px;line-height:25.5px;color:#cdcdcd;transform:scaleX(0.9705);">Services</span>
<span style="left:71.00px;top:1118.31px;font-size:25.5px;line-height:25.5px;color:#ffffff;transform:scaleX(0.9162);font-weight:700;">Tools</span>
<span style="left:69.30px;top:1182.71px;font-size:25.5px;line-height:25.5px;color:#cdcdcd;">Diagnostic reports</span>
<span style="left:71.30px;top:1263.01px;font-size:25.5px;line-height:25.5px;color:#cdcdcd;transform:scaleX(0.9747);">Terminal</span>
</nav>
<header>
<span style="left:3211.70px;top:42.41px;font-size:25.5px;line-height:25.5px;color:#b9dafc;transform:scaleX(0.9653);">Administrative access</span>
<svg style="left:3505px;top:39px" width="28" height="28" viewBox="8 8 496 496" preserveAspectRatio="none"><path fill="#f5f5f5" d="M256 8C119.043 8 8 119.083 8 256c0 136.997 111.043 248 248 248s248-111.003 248-248C504 119.083 392.957 8 256 8zm0 448c-110.532 0-200-89.431-200-200 0-110.495 89.472-200 200-200 110.491 0 200 89.471 200 200 0 110.53-89.431 200-200 200zm107.244-255.2c0 67.052-72.421 68.084-72.421 92.863V300c0 6.627-5.373 12-12 12h-45.647c-6.627 0-12-5.373-12-12v-8.659c0-35.745 27.1-50.034 47.579-61.516 17.561-9.845 28.324-16.541 28.324-29.579 0-17.246-21.999-28.693-39.784-28.693-23.189 0-33.894 10.977-48.942 29.969-4.057 5.12-11.46 6.071-16.666 2.124l-27.824-21.098c-5.107-3.872-6.251-11.066-2.644-16.363C184.846 131.491 214.94 112 261.794 112c49.071 0 101.45 38.304 101.45 88.8zM298 368c0 23.159-18.841 42-42 42s-42-18.841-42-42 18.841-42 42-42 42 18.841 42 42z"/></svg>
<span style="left:3546.79px;top:42.41px;font-size:25.5px;line-height:25.5px;color:#f2f2f2;transform:scaleX(1.0027);">Help</span>
<svg style="left:3656.4px;top:39.5px" width="26.6" height="27.5" viewBox="18 8 476 496" preserveAspectRatio="none"><path fill="#f5f5f5" d="M487.4 315.7l-42.6-24.6c4.3-23.2 4.3-47 0-70.2l42.6-24.6c4.9-2.8 7.1-8.6 5.5-14-11.1-35.6-30-67.8-54.7-94.6-3.8-4.1-10-5.1-14.8-2.3L380.8 110c-17.9-15.4-38.5-27.3-60.8-35.1V25.8c0-5.6-3.9-10.5-9.4-11.7-36.7-8.2-74.3-7.8-109.2 0-5.5 1.2-9.4 6.1-9.4 11.7V75c-22.2 7.9-42.8 19.8-60.8 35.1L88.7 85.5c-4.9-2.8-11-1.9-14.8 2.3-24.7 26.7-43.6 58.9-54.7 94.6-1.7 5.4.6 11.2 5.5 14L67.3 221c-4.3 23.2-4.3 47 0 70.2l-42.6 24.6c-4.9 2.8-7.1 8.6-5.5 14 11.1 35.6 30 67.8 54.7 94.6 3.8 4.1 10 5.1 14.8 2.3l42.6-24.6c17.9 15.4 38.5 27.3 60.8 35.1v49.2c0 5.6 3.9 10.5 9.4 11.7 36.7 8.2 74.3 7.8 109.2 0 5.5-1.2 9.4-6.1 9.4-11.7v-49.2c22.2-7.9 42.8-19.8 60.8-35.1l42.6 24.6c4.9 2.8 11 1.9 14.8-2.3 24.7-26.7 43.6-58.9 54.7-94.6 1.5-5.5-.7-11.3-5.6-14.1zM256 336c-44.1 0-80-35.9-80-80s35.9-80 80-80 80 35.9 80 80-35.9 80-80 80z"/></svg>
<span style="left:3697.03px;top:42.41px;font-size:25.5px;line-height:25.5px;color:#f2f2f2;transform:scaleX(0.9691);">Session</span>
</header>
</div>
<script>(function(){var w=window.innerWidth;if(w&&Math.abs(w-3840)>2){document.documentElement.style.zoom=(w/3840);}})();</script>
</body></html>
